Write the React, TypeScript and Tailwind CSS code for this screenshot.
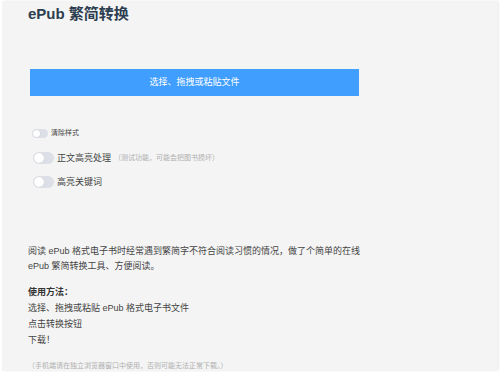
import React from "react";

function Switch({ w, h }: { w: number; h: number }) {
  const k = h - 2;
  return (
    <span
      className="relative inline-block shrink-0 rounded-full bg-[#dcdfe6]"
      style={{ width: w, height: h }}
    >
      <span
        className="absolute left-px top-px rounded-full bg-white shadow-[0_0_1px_rgba(0,0,0,0.15)]"
        style={{ width: k, height: k }}
      />
    </span>
  );
}

export default function App() {
  return (
    <div className="h-[372px] w-[500px] overflow-hidden bg-white pb-px pl-[2px] pr-[3px] pt-px">
      <div
        className="h-full w-full bg-[#f4f4f4] pl-[26px] pt-[3px] text-[#444] shadow-[2px_0_3px_rgba(0,0,0,0.08)]"
        style={{ fontFamily: '"Liberation Sans", "Noto Sans CJK SC", sans-serif' }}
      >
        <h1 className="h-[20px] text-[15px] font-bold leading-[20px] text-[#2c3e50]">
          ePub 繁简转换
        </h1>

        <div className="ml-[2px] mt-[45px] flex h-[27px] w-[329px] items-center justify-center bg-[#409eff] text-[9px] text-white">
          选择、拖拽或粘贴文件
        </div>

        <div className="mt-[32px] flex h-[10px] items-center pl-[4px]">
          <Switch w={16} h={9} />
          <span className="ml-[3px] text-[7px] leading-[10px] text-[#444]">清除样式</span>
        </div>

        <div className="mt-[14px] flex h-[12px] items-center pl-[5px]">
          <Switch w={21} h={12} />
          <span className="ml-[3px] text-[9px] leading-[12px] text-[#444]">正文高亮处理</span>
          <span className="ml-[3px] text-[7px] leading-[12px] text-[#b0b0b0]">
            （测试功能，可能会把图书损坏）
          </span>
        </div>

        <div className="mt-[12px] flex h-[12px] items-center pl-[5px]">
          <Switch w={21} h={12} />
          <span className="ml-[3px] text-[9px] leading-[12px] text-[#444]">高亮关键词</span>
        </div>

        <p className="mt-[56px] text-[9px] leading-[15px]">
          阅读 ePub 格式电子书时经常遇到繁简字不符合阅读习惯的情况，做了个简单的在线
          <br />
          ePub 繁简转换工具、方便阅读。
        </p>

        <div className="mt-[10px] text-[9px] leading-[16px]">
          <div className="font-bold text-[#333]">使用方法：</div>
          <div>选择、拖拽或粘贴 ePub 格式电子书文件</div>
          <div>点击转换按钮</div>
          <div>下载！</div>
        </div>

        <div className="mt-[12px] text-[7px] leading-[12px] text-[#b0b0b0]">
          （手机端请在独立浏览器窗口中使用，否则可能无法正常下载。）
        </div>
      </div>
    </div>
  );
}
